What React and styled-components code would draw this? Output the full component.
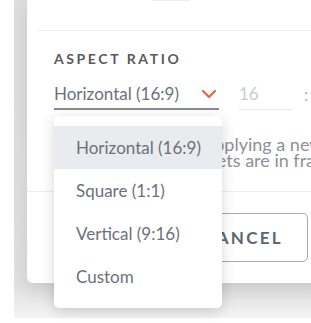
import styled, { createGlobalStyle } from "styled-components";

const GlobalStyle = createGlobalStyle`
  html, body {
    margin: 0;
    padding: 0;
    background: #ffffff;
  }
  body {
    font-family: "Lato", "Liberation Sans", sans-serif;
  }
`;

const options = ["Horizontal (16:9)", "Square (1:1)", "Vertical (9:16)", "Custom"];

export default function App() {
  return (
    <Page>
      <GlobalStyle />
      <Backdrop>
        <Card>
          <Stub />
          <Divider $inset={10} />
          <Section>
            <Label>ASPECT RATIO</Label>
            <Row>
              <SelectWrap>
                <Select>
                  <span>Horizontal (16:9)</span>
                  <svg width="16" height="10" viewBox="0 0 16 10">
                    <path
                      d="M2 2 L8 8 L14 2"
                      fill="none"
                      stroke="#e8643e"
                      strokeWidth="2.2"
                      strokeLinecap="round"
                      strokeLinejoin="round"
                    />
                  </svg>
                </Select>
                <Menu>
                  {options.map((o, i) => (
                    <MenuItem key={o} $active={i === 0}>
                      {o}
                    </MenuItem>
                  ))}
                </Menu>
              </SelectWrap>
              <NumberField>16</NumberField>
              <Colon>:</Colon>
            </Row>
            <Hint>
              <span>Please note that in applying a new ratio,</span>
              <span>be sure that your assets are in frame.</span>
            </Hint>
          </Section>
          <Divider />
          <Footer>
            <Button>CANCEL</Button>
            <Button $primary>APPLY</Button>
          </Footer>
        </Card>
      </Backdrop>
    </Page>
  );
}

const Page = styled.div`
  width: 311px;
  height: 323px;
  overflow: hidden;
  padding-left: 14px;
  box-sizing: border-box;
`;

const Backdrop = styled.div`
  width: 470px;
  height: 318px;
  padding-left: 13px;
  box-sizing: border-box;
  background: linear-gradient(
    to bottom,
    #dddddd 0,
    #e0e0e0 283px,
    #f3f3f3 318px
  );
`;

const Card = styled.div`
  width: 418px;
  background: #ffffff;
  border-bottom-left-radius: 6px;
  box-shadow: 0 8px 18px rgba(0, 0, 0, 0.1);
  padding-bottom: 21px;
`;

const Stub = styled.div`
  width: 37px;
  height: 1px;
  margin-left: 126px;
  background: #ececec;
`;

const Divider = styled.div`
  height: 1px;
  background: #eeeeee;
  margin-left: ${(p) => p.$inset || 0}px;
  margin-top: ${(p) => (p.$inset ? 29 : 0)}px;
`;

const Section = styled.div`
  padding: 20px 0 23px 27px;
`;

const Label = styled.div`
  font-size: 14px;
  line-height: 16px;
  font-weight: 700;
  letter-spacing: 2.6px;
  color: #5a5a5a;
  margin-bottom: 16px;
`;

const Row = styled.div`
  display: flex;
  align-items: flex-end;
  gap: 20px;
`;

const SelectWrap = styled.div`
  position: relative;
  width: 165px;
`;

const Select = styled.div`
  display: flex;
  align-items: center;
  justify-content: space-between;
  padding: 0 1px 3px 0;
  border-bottom: 2px solid #8c8c8c;
  font-size: 17px;
  line-height: 22px;
  color: #6b717c;

  svg {
    margin-right: 1px;
  }
`;

const Menu = styled.div`
  position: absolute;
  top: calc(100% + 6px);
  left: 0;
  width: 168px;
  padding: 10px 0 10px;
  background: #ffffff;
  border-radius: 5px;
  box-shadow: 0 3px 14px rgba(0, 0, 0, 0.16);
  z-index: 2;
`;

const MenuItem = styled.div`
  height: 43px;
  display: flex;
  align-items: center;
  padding-left: 22px;
  font-size: 17px;
  color: #6b717c;
  background: ${(p) => (p.$active ? "#e9ebef" : "transparent")};
`;

const NumberField = styled.div`
  width: 53px;
  padding-bottom: 4px;
  border-bottom: 1px solid #e8e8e8;
  font-size: 17px;
  line-height: 22px;
  color: #c7ccd4;
`;

const Colon = styled.div`
  font-size: 17px;
  line-height: 22px;
  padding-bottom: 4px;
  color: #b0b4bb;
  margin-left: -8px;
`;

const Hint = styled.p`
  margin: 26px 0 0;
  display: flex;
  flex-direction: column;
  font-size: 18px;
  line-height: 16px;
  color: #8c9199;
  white-space: nowrap;
`;

const Footer = styled.div`
  display: flex;
  justify-content: flex-end;
  gap: 10px;
  padding: 21px 27px 0;
`;

const Button = styled.button`
  height: 49px;
  width: ${(p) => (p.$primary ? 100 : 132)}px;
  border-radius: 5px;
  border: 1.5px solid ${(p) => (p.$primary ? "#e8643e" : "#a3abb3")};
  background: ${(p) => (p.$primary ? "#e8643e" : "#ffffff")};
  color: ${(p) => (p.$primary ? "#ffffff" : "#5c6670")};
  font-family: "Lato", "Liberation Sans", sans-serif;
  font-size: 17px;
  font-weight: 700;
  letter-spacing: 2.3px;
  padding: 0 0 0 2px;
`;
